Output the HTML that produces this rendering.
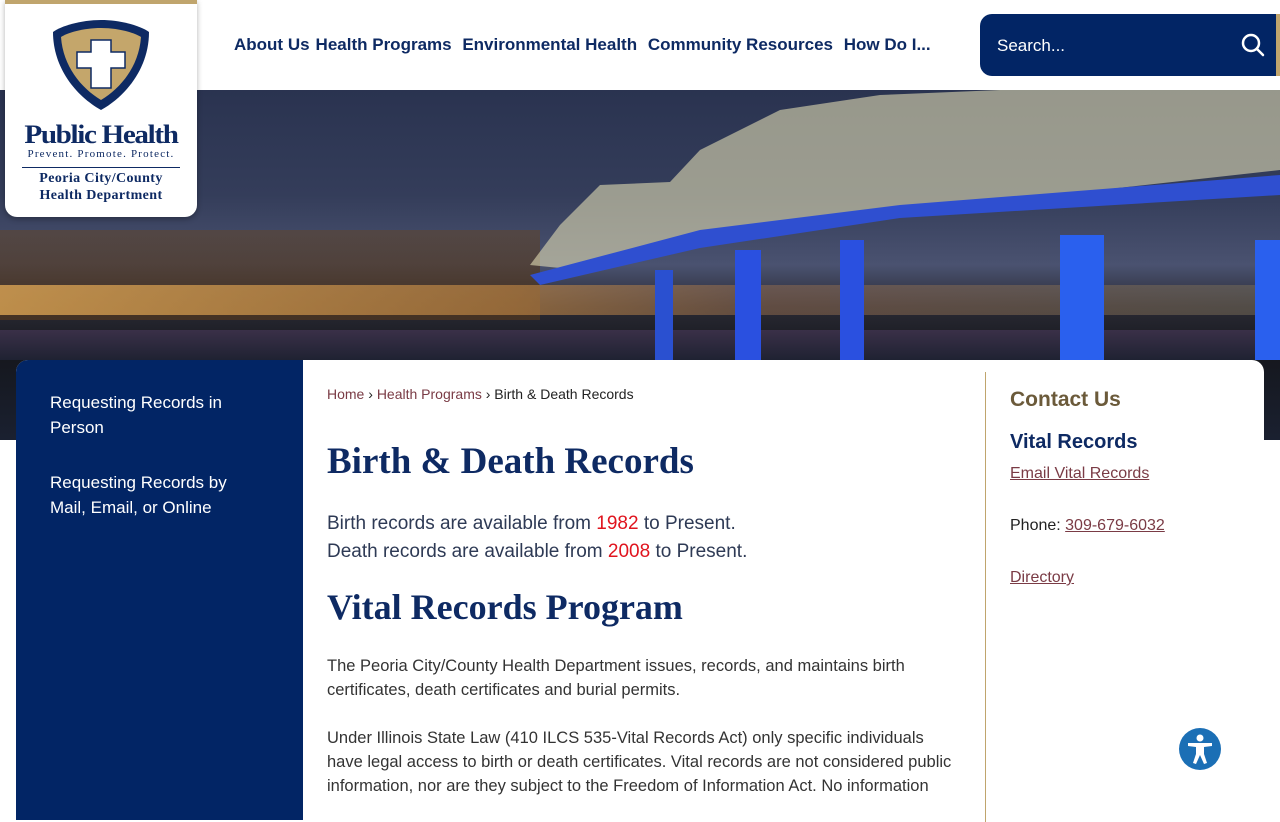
<!DOCTYPE html>
<html><head><meta charset="utf-8"><style>
*{box-sizing:border-box;margin:0;padding:0}
body{width:1280px;height:800px;overflow:hidden;background:#fff;font-family:"Liberation Sans",sans-serif;position:relative}
.hdr{position:absolute;top:0;left:0;width:1280px;height:90px;background:#fff}
.nav{position:absolute;top:35px;left:234px;font-size:17px;font-weight:bold;color:#0e2a63;white-space:nowrap}
.nav span{margin-right:6px}
.search{position:absolute;left:980px;top:14px;width:300px;height:62px;background:#022565;border-radius:12px 0 0 12px;border-right:4px solid #c0a56d}
.search .t{position:absolute;left:17px;top:22px;color:#fff;font-size:17px}
.hero{position:absolute;top:90px;left:0;width:1280px;height:350px;overflow:hidden;
background:linear-gradient(180deg,#2a3350 0%,#343d5a 30%,#4a5270 50%,#2a2a34 62%,#15171d 75%,#1a2030 100%)}
.logo{position:absolute;left:5px;top:0;width:192px;height:217px;background:#fff;border-radius:0 0 12px 12px;border-top:4px solid #c0a56d;box-shadow:0 2px 6px rgba(0,0,0,.3);text-align:center;font-family:"Liberation Serif",serif;color:#0e2a63}
.card{position:absolute;top:360px;left:16px;width:1248px;height:460px;background:#fff;border-radius:12px 12px 0 0}
.side{position:absolute;left:0;top:0;width:287px;height:460px;background:#022565;border-radius:12px 0 0 0;color:#fff;font-size:17px;line-height:25px}
.side p{position:absolute;left:34px;width:200px}
.main{position:absolute;left:311px;top:0;width:640px;color:#333}
.bc{position:absolute;top:26px;font-size:14px;color:#222}
.bc a{color:#7a3b45;text-decoration:none}
h1,h2{font-family:"Liberation Serif",serif;font-weight:bold;color:#0e2a63;position:absolute;white-space:nowrap}
.rail{position:absolute;left:969px;top:12px;width:1px;height:450px;background:#c0a56d}
.r{position:absolute;left:994px;font-size:16px;color:#222}
.r a{color:#7a3b45;text-decoration:underline}
</style></head><body>
<div class="hero">
 <div style="position:absolute;left:0;top:140px;width:540px;height:90px;background:linear-gradient(180deg,rgba(90,70,55,.7),rgba(70,50,35,.95))"></div>
 <div style="position:absolute;left:0;top:195px;width:1280px;height:30px;background:linear-gradient(90deg,rgba(240,180,90,.7),rgba(200,140,70,.6) 40%,rgba(150,110,80,.5) 60%,rgba(120,110,90,.5))"></div>
 <div style="position:absolute;left:0;top:240px;width:1280px;height:30px;background:linear-gradient(180deg,#3a3048,#1f2232)"></div>
 <svg width="1280" height="350" style="position:absolute;left:0;top:0">
  <path d="M530 175 L560 135 L600 95 L670 92 L700 60 L780 20 L880 5 L1000 0 L1280 0 L1280 80 L1100 100 L900 118 L700 145 L580 180 Z" fill="rgba(225,220,180,.6)"/>
  <path d="M530 185 L700 140 L900 115 L1280 85 L1280 105 L900 128 L700 158 L540 195 Z" fill="#2f4fd0"/>
  <rect x="735" y="160" width="26" height="110" fill="#2a50e0"/>
  <rect x="840" y="150" width="24" height="120" fill="#2a50e0"/>
  <rect x="1060" y="145" width="44" height="125" fill="#2a60ee"/>
  <rect x="655" y="180" width="18" height="90" fill="#2a50d0"/>
  <rect x="1255" y="150" width="25" height="120" fill="#2a60ee"/>
 </svg>
</div>
<div class="hdr">
 <div class="nav"><span>About Us</span><span>Health Programs</span> <span>Environmental Health</span> <span>Community Resources</span> <span>How Do I...</span></div>
 <div class="search"><div class="t">Search...</div>
  <svg style="position:absolute;left:261px;top:19px" width="24" height="24" viewBox="0 0 24 24"><circle cx="10" cy="10" r="8" stroke="#fff" stroke-width="2.5" fill="none"/><path d="M16 16 L22 22" stroke="#fff" stroke-width="2.5" stroke-linecap="round"/></svg></div>
</div>
<div class="logo">
 <svg width="100" height="95" viewBox="0 0 100 95" style="margin-top:14px"><path d="M50 2 C70 2 90 8 98 14 C98 50 75 78 50 92 C25 78 2 50 2 14 C10 8 30 2 50 2Z" fill="#0e2a63"/><path d="M50 10 C68 10 84 15 90 19 C88 48 70 70 50 82 C30 70 12 48 10 19 C16 15 32 10 50 10Z" fill="#c4a66b"/><path d="M40 22 L60 22 L60 34 L74 34 L74 50 L60 50 L60 70 L40 70 L40 50 L26 50 L26 34 L40 34Z" fill="#fff" stroke="#0e2a63" stroke-width="1.5"/></svg>
 <div style="font-size:26px;font-weight:bold;letter-spacing:-1.2px;line-height:26px;margin-top:4px;transform:scaleX(1.12)">Public Health</div>
 <div style="font-size:11px;letter-spacing:1.2px;line-height:13px">Prevent. Promote. Protect.</div>
 <div style="border-top:1px solid #0e2a63;width:158px;margin:6px auto 0"></div>
 <div style="font-size:14px;font-weight:bold;line-height:17px;margin-top:2px;letter-spacing:.4px">Peoria City/County<br>Health Department</div>
</div>
<div class="card">
 <div class="side"><p style="top:30px">Requesting Records in Person</p><p style="top:110px">Requesting Records by Mail, Email, or Online</p></div>
 <div class="main">
  <div class="bc"><a>Home</a> › <a>Health Programs</a> › Birth &amp; Death Records</div>
  <h1 style="top:80px;font-size:37px">Birth &amp; Death Records</h1>
  <div style="position:absolute;top:150px;font-size:19px;line-height:28px;color:#2e3a55">Birth records are available from <span style="color:#e0141e">1982</span> to Present.<br>Death records are available from <span style="color:#e0141e">2008</span> to Present.</div>
  <h2 style="top:226px;font-size:36px">Vital Records Program</h2>
  <div style="position:absolute;top:294px;width:635px;font-size:16.5px;line-height:24px;color:#333">The Peoria City/County Health Department issues, records, and maintains birth certificates, death certificates and burial permits.<br><br>Under Illinois State Law (410 ILCS 535-Vital Records Act) only specific individuals have legal access to birth or death certificates. Vital records are not considered public information, nor are they subject to the Freedom of Information Act. No information</div>
 </div>
 <div class="rail"></div>
 <div class="r" style="top:28px;font-size:21px;font-weight:bold;color:#6b5a3a">Contact Us</div>
 <div class="r" style="top:71px;font-size:20px;font-weight:bold;color:#0e2a63">Vital Records</div>
 <div class="r" style="top:105px"><a>Email Vital Records</a></div>
 <div class="r" style="top:157px">Phone: <a>309-679-6032</a></div>
 <div class="r" style="top:209px"><a>Directory</a></div>
</div>
<svg style="position:absolute;left:1179px;top:728px" width="42" height="42" viewBox="0 0 42 42"><circle cx="21" cy="21" r="21" fill="#1b6fb5"/><circle cx="21" cy="10" r="3.5" fill="#fff"/><path d="M9 15 L33 15 L33 18 L25 19 L25 26 L28 35 L25 36 L21 27 L17 36 L14 35 L17 26 L17 19 L9 18Z" fill="#fff"/></svg>
</body></html>
